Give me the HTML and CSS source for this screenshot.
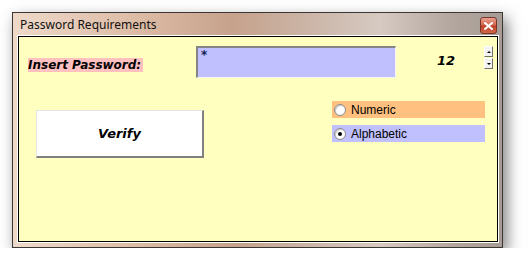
FILE: index.html
```html
<!DOCTYPE html>
<html lang="en">
<head>
  <meta charset="UTF-8" />
  <title>Password Requirements</title>
  <link rel="stylesheet" href="styles.css">
</head>
<body>

  <div class="window">
    <div class="titlebar">
      <span class="title">Password Requirements</span>
      <span class="close">
        <svg width="9" height="8" viewBox="0 0 9 8">
          <path d="M1 1 L8 7 M8 1 L1 7" stroke="#fff" stroke-width="2" stroke-linecap="square"/>
        </svg>
      </span>
    </div>

    <div class="client">
      <div class="row-top">
        <div class="label-cell"><span class="label">Insert Password:</span></div>
        <div class="password">*</div>
        <div class="count">12</div>
        <div class="spinner">
          <span class="spin"><span class="arrow-up"></span></span>
          <span class="spin"><span class="arrow-down"></span></span>
        </div>
      </div>

      <div class="row-bottom">
        <button class="verify">Verify</button>
        <div class="options">
          <label class="option numeric"><span class="radio"></span>Numeric</label>
          <label class="option alpha"><span class="radio checked"></span>Alphabetic</label>
        </div>
      </div>
    </div>
  </div>

</body>
</html>
```

FILE: styles.css
```css
body {
  margin: 0;
  padding: 0;
  background: #fff;
  font-family: 'DejaVu Sans', sans-serif;
}

.window {
  margin: 12px 0 0 12px;
  width: 491px;
  height: 236px;
  box-sizing: border-box;
  border: 1px solid #3c3634;
  padding: 0 4px 5px 5px;
  display: flex;
  flex-direction: column;
  background: linear-gradient(to right, #eed9c9 0%, #ddbca6 25%, #c6a28c 45%, #cbb4a6 60%, #d6cac2 75%, #b2a69e 90%, #a79c95 100%);
  box-shadow: 4px 6px 14px rgba(0,0,0,0.5);
}

.titlebar {
  height: 23px;
  display: flex;
  align-items: flex-start;
  justify-content: space-between;
}

.title {
  font-family: 'Noto Sans', sans-serif;
  font-size: 12px;
  line-height: 16px;
  margin: 4px 0 0 2px;
  color: #111;
}

.close {
  width: 15px;
  height: 15px;
  margin: 4px 1px 0 0;
  border: 1px solid #7a3428;
  border-radius: 3px;
  background: linear-gradient(to bottom, #e8a090 0%, #d46a52 45%, #c0402a 55%, #d06848 100%);
  display: flex;
  align-items: center;
  justify-content: center;
}

.client {
  flex: 1;
  border: 1px solid #000;
  box-shadow: 0 0 0 1px #fff;
  background: #ffffc0;
}

.row-top {
  display: flex;
  margin-top: 9px;
  padding-left: 9px;
}

.label-cell {
  width: 168px;
  padding-top: 8px;
}

.label {
  background: #ffc0c0;
  font-size: 12px;
  font-weight: bold;
  font-style: italic;
  line-height: 14px;
  padding-right: 2px;
}

.password {
  width: 200px;
  height: 32px;
  box-sizing: border-box;
  background: #c0c0ff;
  border-top: 2px solid #858585;
  border-left: 2px solid #858585;
  border-right: 1px solid #f4f4f4;
  border-bottom: 1px solid #f4f4f4;
  padding: 1px 0 0 3px;
  font-size: 12px;
  font-weight: bold;
  line-height: 12px;
  color: #102050;
}

.count {
  width: 59px;
  padding-top: 7px;
  text-align: right;
  font-size: 13px;
  font-weight: bold;
  font-style: italic;
  line-height: 15px;
}

.spinner {
  margin-left: 29px;
  display: flex;
  flex-direction: column;
  gap: 1px;
}

.spin {
  width: 9px;
  height: 11px;
  box-sizing: border-box;
  background: #f2f2f2;
  border-top: 1px solid #fff;
  border-left: 1px solid #fff;
  border-right: 1px solid #707070;
  border-bottom: 1px solid #707070;
  display: flex;
  align-items: center;
  justify-content: center;
}

.arrow-up {
  border-left: 2px solid transparent;
  border-right: 2px solid transparent;
  border-bottom: 2px solid #000;
}

.arrow-down {
  border-left: 2px solid transparent;
  border-right: 2px solid transparent;
  border-top: 2px solid #000;
}

.row-bottom {
  display: flex;
  align-items: flex-start;
  margin-top: 23px;
  padding-left: 17px;
}

.verify {
  margin-top: 9px;
  width: 168px;
  height: 48px;
  padding: 0;
  background: #fff;
  border-top: 1px solid #e4e4e4;
  border-left: 1px solid #e4e4e4;
  border-right: 2px solid #808080;
  border-bottom: 2px solid #808080;
  font-family: 'DejaVu Sans', sans-serif;
  font-size: 13px;
  font-weight: bold;
  font-style: italic;
  color: #000;
}

.options {
  margin-left: 128px;
  width: 153px;
  display: flex;
  flex-direction: column;
  gap: 7px;
}

.option {
  height: 17px;
  display: flex;
  align-items: center;
  font-family: 'Liberation Sans', sans-serif;
  font-size: 12px;
  color: #000;
}

.numeric {
  background: #ffc080;
}

.alpha {
  background: #c0c0ff;
}

.radio {
  width: 12px;
  height: 12px;
  box-sizing: border-box;
  margin: 0 5px 0 2px;
  border-radius: 50%;
  background: #fff;
  border: 1px solid #8a8a8a;
  box-shadow: inset 1px 1px 1px #c8c8c8;
  display: flex;
  align-items: center;
  justify-content: center;
}

.radio.checked::after {
  content: "";
  width: 4px;
  height: 4px;
  border-radius: 50%;
  background: #000;
}
```
